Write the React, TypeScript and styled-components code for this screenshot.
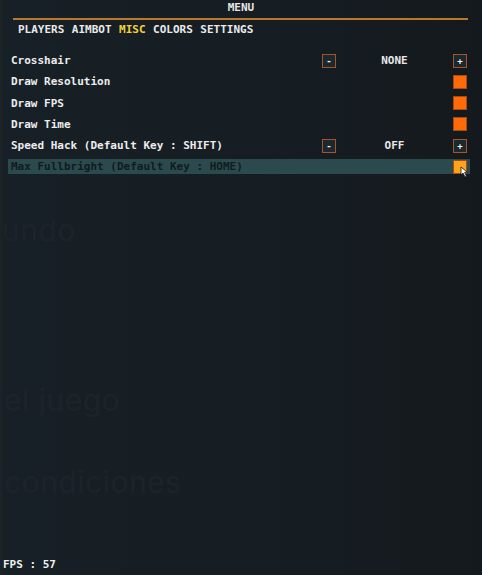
import styled, { createGlobalStyle } from 'styled-components';

const GlobalStyle = createGlobalStyle`
  html, body {
    margin: 0;
    padding: 0;
    background: #161c21;
  }
`;

type Option =
  | { key: string; label: string; kind: 'toggle'; on: boolean }
  | { key: string; label: string; kind: 'select'; value: string };

const tabs = ['PLAYERS', 'AIMBOT', 'MISC', 'COLORS', 'SETTINGS'];

const options: Option[] = [
  { key: 'crosshair', label: 'Crosshair', kind: 'select', value: 'NONE' },
  { key: 'res', label: 'Draw Resolution', kind: 'toggle', on: true },
  { key: 'fps', label: 'Draw FPS', kind: 'toggle', on: true },
  { key: 'time', label: 'Draw Time', kind: 'toggle', on: true },
  { key: 'speed', label: 'Speed Hack (Default Key : SHIFT)', kind: 'select', value: 'OFF' },
  { key: 'bright', label: 'Max Fullbright (Default Key : HOME)', kind: 'toggle', on: true },
];

const App = () => {
  const hovered = 'bright';

  return (
    <Screen>
      <GlobalStyle />
      <Ghost top={212} left={2}>undo</Ghost>
      <Ghost top={382} left={4}>el juego</Ghost>
      <Ghost top={464} left={4}>condiciones</Ghost>

      <Menu>
        <Title>MENU</Title>
        <Divider />
        <Tabs>
          {tabs.map((t) => (
            <TabItem key={t} active={t === 'MISC'}>
              {t}
            </TabItem>
          ))}
        </Tabs>

        <List>
          {options.map((o) => (
            <Row key={o.key} highlighted={o.key === hovered}>
              <Label highlighted={o.key === hovered}>{o.label}</Label>
              {o.kind === 'select' ? (
                <Selector>
                  <StepButton>-</StepButton>
                  <Value>{o.value}</Value>
                  <StepButton>+</StepButton>
                </Selector>
              ) : (
                <Check hovered={o.key === hovered}>
                  {o.key === hovered && (
                    <Cursor width="10" height="12" viewBox="0 0 10 12">
                      <path d="M1 1 L1 9 L3 7 L5 11 L6.5 10.3 L4.6 6.4 L7.5 6.4 Z" fill="#fff" stroke="#111" strokeWidth="0.8" />
                    </Cursor>
                  )}
                </Check>
              )}
            </Row>
          ))}
        </List>
      </Menu>

      <Footer>FPS : 57</Footer>
    </Screen>
  );
};

const Screen = styled.div`
  position: relative;
  width: 482px;
  height: 575px;
  overflow: hidden;
  display: flex;
  flex-direction: column;
  justify-content: space-between;
  background: linear-gradient(90deg, #1d2428 0px, #172026 4px, #161d22 60%, #14191d 100%);
  font-family: 'DejaVu Sans Mono', 'Liberation Mono', monospace;
  font-weight: 700;
  color: #ececec;
`;

const Ghost = styled.div<{ top: number; left: number }>`
  position: absolute;
  top: ${({ top }) => top}px;
  left: ${({ left }) => left}px;
  font-family: 'Inter', 'Noto Sans', sans-serif;
  font-weight: 400;
  font-size: 30px;
  color: #1d2429;
  letter-spacing: 0.5px;
  pointer-events: none;
`;

const Menu = styled.div`
  position: relative;
  display: flex;
  flex-direction: column;
  padding-top: 1px;
`;

const Title = styled.div`
  height: 14px;
  line-height: 14px;
  font-size: 11px;
  text-align: center;
  color: #e6e6e6;
`;

const Divider = styled.div`
  margin: 3px 14px 0 13px;
  height: 2px;
  background: #b8782e;
`;

const Tabs = styled.div`
  display: flex;
  gap: 7.5px;
  padding: 3px 0 0 18px;
  height: 14px;
  align-items: center;
`;

const TabItem = styled.span<{ active: boolean }>`
  font-size: 11px;
  line-height: 14px;
  color: ${({ active }) => (active ? '#f2d23c' : '#eaeaea')};
`;

const List = styled.div`
  display: flex;
  flex-direction: column;
  gap: 6.25px;
  margin: 16px 12px 0 8px;
`;

const Row = styled.div<{ highlighted: boolean }>`
  height: 15px;
  display: flex;
  align-items: center;
  padding: 0 3px 0 3px;
  background: ${({ highlighted }) => (highlighted ? '#2b4a4d' : 'transparent')};
`;

const Label = styled.span<{ highlighted: boolean }>`
  flex: 1;
  font-size: 11px;
  line-height: 15px;
  white-space: pre;
  color: ${({ highlighted }) => (highlighted ? '#0f1c20' : '#ececec')};
`;

const Selector = styled.div`
  display: flex;
  align-items: center;
`;

const StepButton = styled.div`
  width: 12px;
  height: 12px;
  border: 1px solid #a4532c;
  background: #1b282e;
  color: #f4f4f4;
  font-size: 9px;
  line-height: 12px;
  text-align: center;
`;

const Value = styled.span`
  width: 117px;
  text-align: center;
  font-size: 11px;
  line-height: 14px;
  color: #e8e8e8;
`;

const Check = styled.div<{ hovered: boolean }>`
  position: relative;
  width: 12px;
  height: 12px;
  border: 1px solid #a84a12;
  background: ${({ hovered }) => (hovered ? '#ffa41a' : '#ff6a08')};
`;

const Cursor = styled.svg`
  position: absolute;
  left: 6px;
  top: 5px;
`;

const Footer = styled.div`
  padding: 0 0 3px 3px;
  font-size: 11px;
  line-height: 14px;
  color: #f0f0f0;
`;

export default App;
